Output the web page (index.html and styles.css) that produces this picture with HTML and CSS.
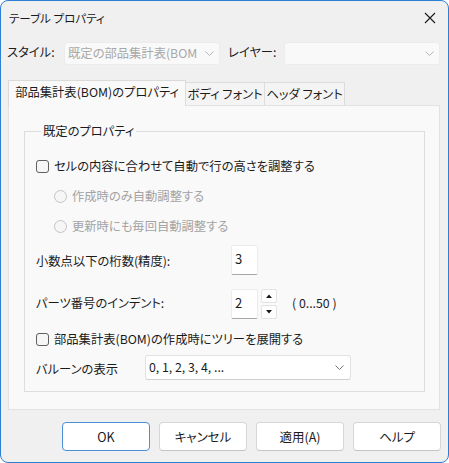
FILE: index.html
```html
<!DOCTYPE html>
<html lang="ja">
<head>
<meta charset="utf-8">
<title>テーブル プロパティ</title>
<link rel="stylesheet" href="styles.css">
</head>
<body>
<div class="window">
  <div class="titlebar">
    <span class="title">テーブル プロパティ</span>
    <span class="close">
      <svg width="12" height="12" viewBox="0 0 12 12"><path d="M1 1L11 11M11 1L1 11" stroke="#1a1a1a" stroke-width="1.1" fill="none"/></svg>
    </span>
  </div>

  <div class="toprow">
    <span class="toplabel lbl-style">スタイル:</span>
    <div class="combo disabled">
      <span class="combo-text clip">既定の部品集計表(BOM</span>
      <svg class="chev" width="9" height="5" viewBox="0 0 9 5"><path d="M0.5 0.5L4.5 4.5L8.5 0.5" stroke="#b5b5b5" fill="none"/></svg>
    </div>
    <span class="toplabel lbl-layer">レイヤー:</span>
    <div class="combo disabled">
      <span class="combo-text"></span>
      <svg class="chev" width="9" height="5" viewBox="0 0 9 5"><path d="M0.5 0.5L4.5 4.5L8.5 0.5" stroke="#b5b5b5" fill="none"/></svg>
    </div>
  </div>

  <div class="tabs">
    <div class="tab active tab1">部品集計表(BOM)のプロパティ</div>
    <div class="tab tab2">ボディ フォント</div>
    <div class="tab tab3">ヘッダ フォント</div>
  </div>

  <div class="panel">
    <fieldset class="group">
      <legend>既定のプロパティ</legend>

      <div class="row r-check1">
        <span class="checkbox"></span>
        <span class="cb-text">セルの内容に合わせて自動で行の高さを調整する</span>
      </div>
      <div class="row r-radio1">
        <span class="radio"></span>
        <span class="rd-text">作成時のみ自動調整する</span>
      </div>
      <div class="row r-radio2">
        <span class="radio"></span>
        <span class="rd-text">更新時にも毎回自動調整する</span>
      </div>
      <div class="row r-prec">
        <span class="field-label">小数点以下の桁数(精度):</span>
        <div class="numbox">3</div>
      </div>
      <div class="row r-indent">
        <span class="field-label">パーツ番号のインデント:</span>
        <div class="numbox">2</div>
        <div class="spin">
          <span class="spin-btn"><svg width="6" height="4" viewBox="0 0 6 4"><path d="M0 4L3 0.5L6 4Z" fill="#1a1a1a"/></svg></span>
          <span class="spin-btn"><svg width="6" height="4" viewBox="0 0 6 4"><path d="M0 0L3 3.5L6 0Z" fill="#1a1a1a"/></svg></span>
        </div>
        <span class="range">( 0...50 )</span>
      </div>
      <div class="row r-check2">
        <span class="checkbox"></span>
        <span class="cb-text">部品集計表(BOM)の作成時にツリーを展開する</span>
      </div>
      <div class="row r-balloon">
        <span class="balloon-label">バルーンの表示</span>
        <div class="combo white">
          <span class="combo-text">0, 1, 2, 3, 4, ...</span>
          <svg class="chev" width="9" height="5" viewBox="0 0 9 5"><path d="M0.5 0.5L4.5 4.5L8.5 0.5" stroke="#777" fill="none"/></svg>
        </div>
      </div>
    </fieldset>
  </div>

  <div class="buttons">
    <button class="btn default">OK</button>
    <button class="btn">キャンセル</button>
    <button class="btn">適用(A)</button>
    <button class="btn">ヘルプ</button>
  </div>
</div>
</body>
</html>
```

FILE: styles.css
```css
html, body {
  margin: 0;
  padding: 0;
  background: #ffffff;
}

.window {
  width: 449px;
  height: 463px;
  box-sizing: border-box;
  border: 1px solid #2d7fd6;
  border-radius: 8px;
  background: #f0f0f0;
  overflow: hidden;
  display: flex;
  flex-direction: column;
  font-family: "Noto Sans CJK JP", "Noto Sans", sans-serif;
  font-feature-settings: "palt";
  font-size: 12.3px;
  color: #1b1b1b;
}

.titlebar {
  height: 33px;
  display: flex;
  align-items: center;
  justify-content: space-between;
  padding: 0 12px 0 8px;
  flex: none;
}

.title {
  font-size: 11.5px;
  line-height: 16px;
}

.close {
  display: flex;
  width: 12px;
  height: 12px;
  margin-top: 1px;
}

.toprow {
  margin-top: 8px;
  height: 23px;
  display: flex;
  align-items: center;
  padding-left: 6px;
  flex: none;
}

.toplabel {
  line-height: 16px;
  margin-top: -4px;
}

.lbl-style { width: 57px; }
.lbl-layer { width: 56px; margin-left: 8px; }

.combo {
  width: 156px;
  height: 23px;
  box-sizing: border-box;
  display: flex;
  align-items: center;
  border-radius: 3px;
  padding: 0 5px 0 3px;
}

.combo.disabled {
  background: #f9f9f9;
  border: 1px solid #ececec;
  color: #a8a8a8;
}

.combo-text {
  flex: 1;
  white-space: nowrap;
  line-height: 17px;
}

.combo-text.clip {
  overflow: hidden;
  max-width: 134px;
}

.chev { flex: none; margin-left: 4px; }

.tabs {
  margin-top: 15px;
  height: 25px;
  padding-left: 7px;
  display: flex;
  align-items: flex-end;
  flex: none;
  position: relative;
  z-index: 1;
}

.tab {
  box-sizing: border-box;
  height: 23px;
  border: 1px solid #dcdcdc;
  border-bottom: none;
  background: #f4f4f4;
  display: flex;
  align-items: center;
  justify-content: center;
  line-height: 16px;
  white-space: nowrap;
}

.tab.active {
  height: 26px;
  margin-bottom: -1px;
  background: #f9f9f9;
  border-color: #dadada;
}

.tab1 { width: 178px; padding-bottom: 3px; }
.tab2 { width: 80px; margin-left: -1px; }
.tab3 { width: 81px; margin-left: -1px; }

.panel {
  margin-left: 7px;
  width: 432px;
  height: 305px;
  box-sizing: border-box;
  border: 1px solid #e2e2e2;
  background: #f9f9f9;
  padding: 17px 0 0 15px;
  flex: none;
}

.group {
  margin: 0;
  width: 401px;
  height: 269px;
  box-sizing: border-box;
  border: 1px solid #dddddd;
  padding: 15px 0 0 11px;
  min-width: 0;
}

.group legend {
  padding: 0 2px;
  margin-left: 5px;
  line-height: 16px;
}

.row {
  display: flex;
  align-items: center;
  line-height: 16px;
}

.r-check1 { height: 24px; }
.r-radio1 { height: 24px; margin-top: 6px; padding-left: 18px; }
.r-radio2 { height: 24px; margin-top: 6px; padding-left: 18px; }
.r-prec { height: 30px; margin-top: 7px; }
.r-indent { height: 30px; margin-top: 14px; }
.r-check2 { height: 24px; margin-top: 8px; }
.r-balloon { height: 25px; margin-top: 4px; }

.checkbox {
  width: 13px;
  height: 13px;
  box-sizing: border-box;
  border: 1px solid #606060;
  border-radius: 3px;
  background: #f6f6f6;
  flex: none;
}

.cb-text { margin-left: 5px; }

.radio {
  width: 13px;
  height: 13px;
  box-sizing: border-box;
  border: 1px solid #c4c4c4;
  border-radius: 50%;
  background: #f6f6f6;
  flex: none;
}

.rd-text { margin-left: 5px; color: #a3a3a3; }

.field-label {
  width: 195px;
  margin-top: 1px;
}

.r-indent .field-label { margin-top: -3px; }

.numbox {
  width: 27px;
  height: 30px;
  box-sizing: border-box;
  background: #ffffff;
  border: 1px solid #ececec;
  border-bottom: 1px solid #a8a8a8;
  border-radius: 2px;
  padding: 4px 0 0 3px;
  font-size: 13px;
  line-height: 17px;
  align-self: flex-start;
}

.spin {
  display: flex;
  flex-direction: column;
  justify-content: space-between;
  height: 30px;
  margin-left: 3px;
  align-self: flex-start;
}

.spin-btn {
  width: 16px;
  height: 14px;
  box-sizing: border-box;
  background: #ffffff;
  border: 1px solid #e3e3e3;
  border-radius: 2px;
  display: flex;
  align-items: center;
  justify-content: center;
}

.range {
  margin-left: 15px;
  margin-top: -3px;
}

.balloon-label {
  width: 109px;
  margin-top: 3px;
}

.combo.white {
  width: 206px;
  height: 25px;
  background: #ffffff;
  border: 1px solid #e2e2e2;
  border-bottom-color: #cfcfcf;
  padding: 0 6px 0 3px;
}

.buttons {
  margin-top: 12px;
  height: 29px;
  display: flex;
  justify-content: flex-end;
  gap: 9px;
  padding-right: 7px;
  flex: none;
}

.btn {
  width: 88px;
  height: 29px;
  box-sizing: border-box;
  background: #ffffff;
  border: 1px solid #d6d6d6;
  border-bottom-color: #c4c4c4;
  border-radius: 4px;
  font-family: "Noto Sans CJK JP", "Noto Sans", sans-serif;
  font-feature-settings: "palt";
  font-size: 12.5px;
  color: #1b1b1b;
  padding: 0;
  line-height: 16px;
}

.btn.default {
  border: 1.5px solid #4b8fd6;
}
```
